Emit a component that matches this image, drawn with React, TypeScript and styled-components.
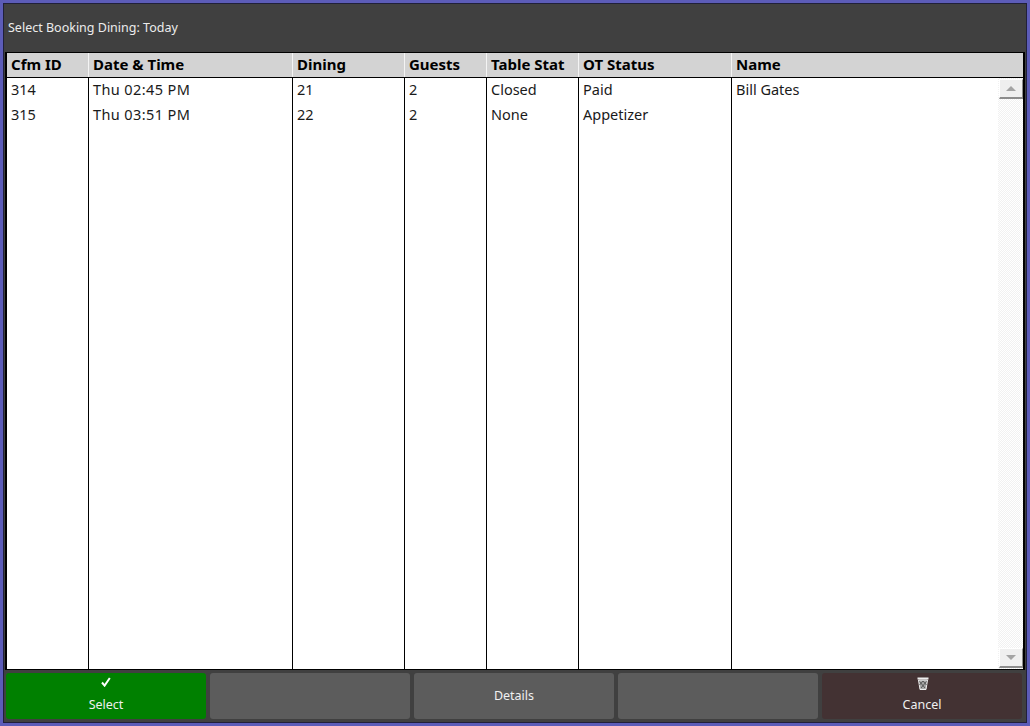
import styled, { createGlobalStyle } from 'styled-components';

const GlobalStyle = createGlobalStyle`
  html, body {
    margin: 0;
    padding: 0;
    background: #5c5cb8;
  }
  * {
    box-sizing: border-box;
  }
`;

const columns = [
  { title: 'Cfm ID', width: 82 },
  { title: 'Date & Time', width: 204 },
  { title: 'Dining', width: 112 },
  { title: 'Guests', width: 82 },
  { title: 'Table Stat', width: 92 },
  { title: 'OT Status', width: 153 },
];

const bookings = [
  ['314', 'Thu 02:45 PM', '21', '2', 'Closed', 'Paid', 'Bill Gates'],
  ['315', 'Thu 03:51 PM', '22', '2', 'None', 'Appetizer', ''],
];

const gridTemplate = `${columns.map((c) => `${c.width}px`).join(' ')} 1fr`;

const CheckIcon = () => (
  <svg width="10" height="10" viewBox="0 0 10 10">
    <path d="M1 5.5 L3.6 8.6 L8.8 1" fill="none" stroke="#fff" strokeWidth="2" />
  </svg>
);

const TrashIcon = () => (
  <svg width="12" height="13" viewBox="0 0 12 13">
    <rect x="0.5" y="0.5" width="11" height="2" fill="#eee" />
    <path d="M1.5 3 L3 12.5 H9 L10.5 3 Z" fill="#a8a8a8" stroke="#eee" strokeWidth="1" />
    <path d="M2.5 4.5 L8 11 M9.5 4.5 L4 11 M6 4 L2.5 8 M6 4 L9.5 8" fill="none" stroke="#444" strokeWidth="0.8" />
  </svg>
);

const App = () => {
  return (
    <>
      <GlobalStyle />
      <Window>
        <TitleBar>Select Booking Dining: Today</TitleBar>
        <TableBox>
          <HeaderRow>
            {columns.map((c) => (
              <HeaderCell key={c.title}>{c.title}</HeaderCell>
            ))}
            <HeaderCell>Name</HeaderCell>
          </HeaderRow>
          <Body>
            <ColumnLines>
              {columns.map((c) => (
                <ColumnLine key={c.title} />
              ))}
              <div />
            </ColumnLines>
            <Rows>
              {bookings.map((row) => (
                <Row key={row[0]}>
                  {row.map((value, i) => (
                    <Cell key={i} $wide={i === 1}>
                      {value}
                    </Cell>
                  ))}
                </Row>
              ))}
            </Rows>
            <ScrollBar>
              <ScrollButton>
                <UpArrow />
              </ScrollButton>
              <ScrollButton>
                <DownArrow />
              </ScrollButton>
            </ScrollBar>
          </Body>
        </TableBox>
        <ButtonBar>
          <ActionButton $bg="#008000">
            <IconSlot>
              <CheckIcon />
            </IconSlot>
            <ButtonLabel>Select</ButtonLabel>
          </ActionButton>
          <ActionButton />
          <ActionButton $centered>
            <ButtonLabel>Details</ButtonLabel>
          </ActionButton>
          <ActionButton />
          <ActionButton $bg="#433233">
            <IconSlot $shift>
              <TrashIcon />
            </IconSlot>
            <ButtonLabel>Cancel</ButtonLabel>
          </ActionButton>
        </ButtonBar>
      </Window>
    </>
  );
};
export default App;

const Window = styled.div`
  width: 1030px;
  height: 726px;
  border: 3px solid #5c5cb8;
  outline: 1px solid #20203a;
  outline-offset: -4px;
  background: #404040;
  padding: 1px;
  display: flex;
  flex-direction: column;
  font-family: 'Noto Sans', 'Open Sans', sans-serif;
  overflow: hidden;
`;

const TitleBar = styled.div`
  height: 46px;
  margin-bottom: 2px;
  flex: none;
  display: flex;
  align-items: center;
  padding-left: 4px;
  color: #ececec;
  font-size: 12.5px;
`;

const TableBox = styled.div`
  flex: none;
  height: 618px;
  margin: 0 1px;
  border: 1px solid #000;
  border-left-width: 2px;
  border-right-width: 2px;
  display: flex;
  flex-direction: column;
  background: #fff;
`;

const HeaderRow = styled.div`
  flex: none;
  height: 25px;
  display: grid;
  grid-template-columns: ${gridTemplate};
  background: #d3d3d3;
  border-bottom: 1px solid #000;
`;

const HeaderCell = styled.div`
  padding-left: 4px;
  border-right: 1px solid #f4f4f4;
  color: #000;
  font-size: 15px;
  font-weight: 700;
  line-height: 23px;
  white-space: nowrap;
  overflow: hidden;

  &:last-child {
    border-right: none;
  }
`;

const Body = styled.div`
  flex: 1;
  position: relative;
  min-height: 0;
`;

const ColumnLines = styled.div`
  position: absolute;
  inset: 0;
  display: grid;
  grid-template-columns: ${gridTemplate};
`;

const ColumnLine = styled.div`
  border-right: 1px solid #000;
`;

const Rows = styled.div`
  position: relative;
  display: flex;
  flex-direction: column;
`;

const Row = styled.div`
  height: 25px;
  display: grid;
  grid-template-columns: ${gridTemplate};
`;

const Cell = styled.div<{ $wide?: boolean }>`
  padding-left: 4px;
  color: #1a1a1a;
  font-size: 14.5px;
  line-height: 22px;
  letter-spacing: ${(p) => (p.$wide ? '0.4px' : '0')};
  white-space: nowrap;
`;

const ScrollBar = styled.div`
  position: absolute;
  top: 0;
  right: 0;
  bottom: 0;
  width: 25px;
  display: flex;
  flex-direction: column;
  justify-content: space-between;
  padding: 1px 0 1px 1px;
  background: conic-gradient(#f1f1f1 25%, #fff 0 50%, #f1f1f1 0 75%, #fff 0) 0 0 / 2px 2px;
`;

const ScrollButton = styled.div`
  height: 20px;
  width: 24px;
  display: flex;
  align-items: center;
  justify-content: center;
  background: #efefef;
  border: 1px solid #fff;
  border-right-color: #8c8c8c;
  border-bottom: 2px solid #8c8c8c;
`;

const UpArrow = styled.div`
  width: 0;
  height: 0;
  border-left: 5px solid transparent;
  border-right: 5px solid transparent;
  border-bottom: 5px solid #a4a4a4;
`;

const DownArrow = styled.div`
  width: 0;
  height: 0;
  border-left: 5px solid transparent;
  border-right: 5px solid transparent;
  border-top: 5px solid #a4a4a4;
`;

const ButtonBar = styled.div`
  flex: 1;
  display: grid;
  grid-template-columns: repeat(5, 200px);
  column-gap: 4px;
  padding: 3px 0 3px 2px;
`;

const ActionButton = styled.div<{ $bg?: string; $centered?: boolean }>`
  background: ${(p) => p.$bg ?? '#5c5c5c'};
  border-radius: 3px;
  display: flex;
  flex-direction: column;
  align-items: center;
  justify-content: ${(p) => (p.$centered ? 'center' : 'flex-start')};
  padding-top: ${(p) => (p.$centered ? '0' : '4px')};
  padding-bottom: ${(p) => (p.$centered ? '2px' : '0')};
  color: #f0f0f0;
`;

const ButtonLabel = styled.span`
  font-size: 12.5px;
  line-height: 17px;
`;

const IconSlot = styled.div<{ $shift?: boolean }>`
  height: 19px;
  display: flex;
  align-items: flex-start;
  justify-content: center;
  padding-left: ${(p) => (p.$shift ? '2px' : '0')};
`;
